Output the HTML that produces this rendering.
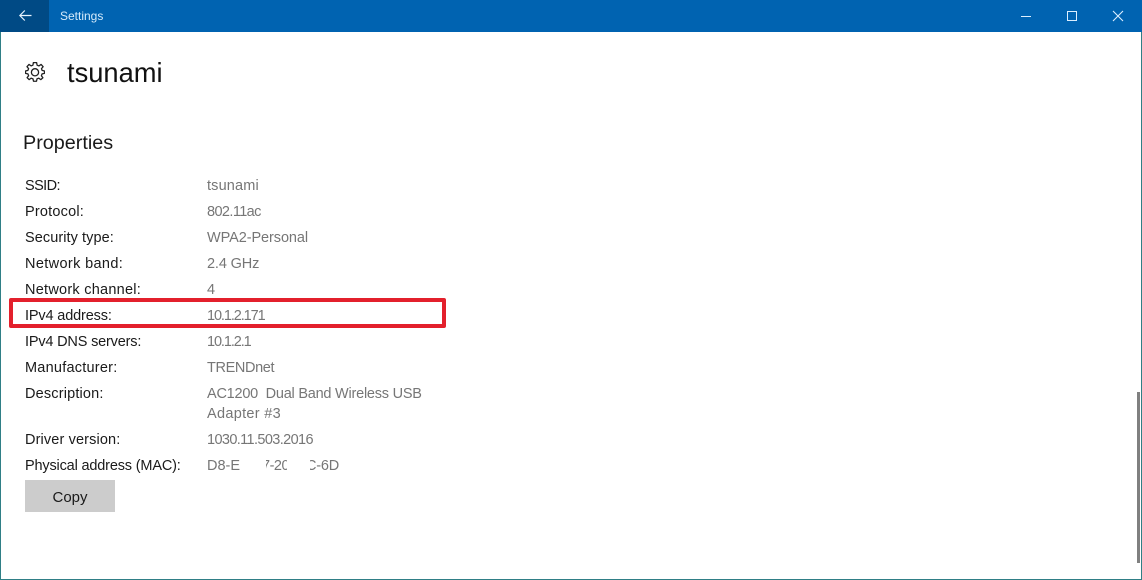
<!DOCTYPE html>
<html><head><meta charset="utf-8"><style>
html,body{margin:0;padding:0;background:#fff}
body{width:1142px;height:580px;position:relative;overflow:hidden;font-family:"Liberation Sans",sans-serif;}
.a{position:absolute;white-space:pre}
.l{left:25px;font-size:14.5px;color:#1a1a1a;line-height:20px}
.v{left:207px;font-size:14.5px;color:#767676;line-height:20px}
</style></head><body>
<div class="a" style="left:0;top:0;width:1142px;height:32px;background:#0063b1"></div>
<div class="a" style="left:0;top:0;width:49px;height:32px;background:#004a85"></div>
<svg class="a" style="left:19px;top:10px" width="13" height="12" viewBox="0 0 13 12" fill="none" stroke="#e8f4ff" stroke-width="1.2"><path d="M.8 5.5H12.5M5.8.5L.8 5.5L5.8 10.5"/></svg>
<div class="a" style="left:60px;top:8px;font-size:12px;line-height:16px;color:#d5ebfb;padding-top:0">Settings</div>
<div class="a" style="left:1021px;top:16px;width:10px;height:1px;background:#dcefff"></div>
<div class="a" style="left:1067px;top:11px;width:8px;height:8px;border:1px solid #dcefff"></div>
<svg class="a" style="left:1112px;top:10px" width="12" height="12" viewBox="0 0 12 12" stroke="#dcefff" stroke-width="1.1"><path d="M1 1L11 11M11 1L1 11"/></svg>

<div class="a" style="left:0;top:32px;width:1px;height:548px;background:#2f7f86"></div>
<div class="a" style="left:1141px;top:32px;width:1px;height:548px;background:#2f7f86"></div>
<div class="a" style="left:0;top:579px;width:1142px;height:1px;background:#2f7f86"></div>

<svg class="a" style="left:25px;top:62px" width="20" height="20" viewBox="0 0 20 20" fill="none" stroke="#222" stroke-width="1.3" stroke-linejoin="round"><path d="M8.4 1H11.6L12.1 3.6L13.9 4.4L16.1 2.9L18.1 5.2L16.5 7.2L17.1 9L19.5 9.6V12L17.1 12.5L16.4 14.4L17.9 16.5L15.8 18.4L13.7 16.9L12 17.6L11.5 20H8.5L8 17.6L6.2 16.9L4.2 18.4L2.1 16.4L3.6 14.4L2.9 12.5L.5 12V9.6L2.9 9L3.6 7.2L2 5.2L4 2.9L6.1 4.4L7.9 3.6Z" transform="translate(0 -.4) scale(1 .98)"/><circle cx="10" cy="10.3" r="3.6"/></svg>
<div class="a" style="left:67px;top:57px;font-size:27.3px;line-height:32px;color:#111">tsunami</div>
<div class="a" style="left:23px;top:130px;font-size:19.8px;line-height:26px;color:#1a1a1a">Properties</div>

<div class="a l" style="top:176px;letter-spacing:-.6px">SSID:</div><div class="a v" style="top:176px;letter-spacing:.15px">tsunami</div>
<div class="a l" style="top:202px;letter-spacing:.2px">Protocol:</div><div class="a v" style="top:202px;letter-spacing:-.6px">802.11ac</div>
<div class="a l" style="top:228px;letter-spacing:.07px">Security type:</div><div class="a v" style="top:228px;letter-spacing:-.08px">WPA2-Personal</div>
<div class="a l" style="top:254px;letter-spacing:.36px">Network band:</div><div class="a v" style="top:254px;letter-spacing:-.14px">2.4 GHz</div>
<div class="a l" style="top:280px;letter-spacing:.25px">Network channel:</div><div class="a v" style="top:280px">4</div>
<div class="a l" style="top:306px;letter-spacing:-.15px">IPv4 address:</div><div class="a v" style="top:306px;letter-spacing:-1.1px">10.1.2.171</div>
<div class="a l" style="top:332px;letter-spacing:-.18px">IPv4 DNS servers:</div><div class="a v" style="top:332px;letter-spacing:-1.1px">10.1.2.1</div>
<div class="a l" style="top:358px;letter-spacing:.23px">Manufacturer:</div><div class="a v" style="top:358px;letter-spacing:-.37px">TRENDnet</div>
<div class="a l" style="top:384px;letter-spacing:.17px">Description:</div><div class="a v" style="top:384px;letter-spacing:-.23px">AC1200  Dual Band Wireless USB</div>
<div class="a v" style="top:404px;letter-spacing:.3px">Adapter #3</div>
<div class="a l" style="top:430px;letter-spacing:.13px">Driver version:</div><div class="a v" style="top:430px;letter-spacing:-.62px">1030.11.503.2016</div>
<div class="a l" style="top:456px;letter-spacing:-.17px">Physical address (MAC):</div>
<div class="a v" style="top:456px">D8-E</div>
<div class="a v" style="top:456px;left:262px;letter-spacing:-.5px">7-20</div>
<div class="a v" style="top:456px;left:306px;letter-spacing:-.2px">C-6D</div>
<div class="a" style="left:240px;top:456px;width:26px;height:20px;background:#fff"></div>
<div class="a" style="left:287px;top:456px;width:23px;height:20px;background:#fff"></div>

<div class="a" style="left:25px;top:480px;width:90px;height:32px;background:#ccc;color:#1a1a1a;font-size:15px;line-height:35px;text-align:center">Copy</div>

<div class="a" style="left:9px;top:298px;width:429px;height:22px;border:4px solid #e3202c;border-radius:2px"></div>
<div class="a" style="left:1137px;top:392px;width:2.5px;height:171px;background:#808080"></div>
</body></html>
